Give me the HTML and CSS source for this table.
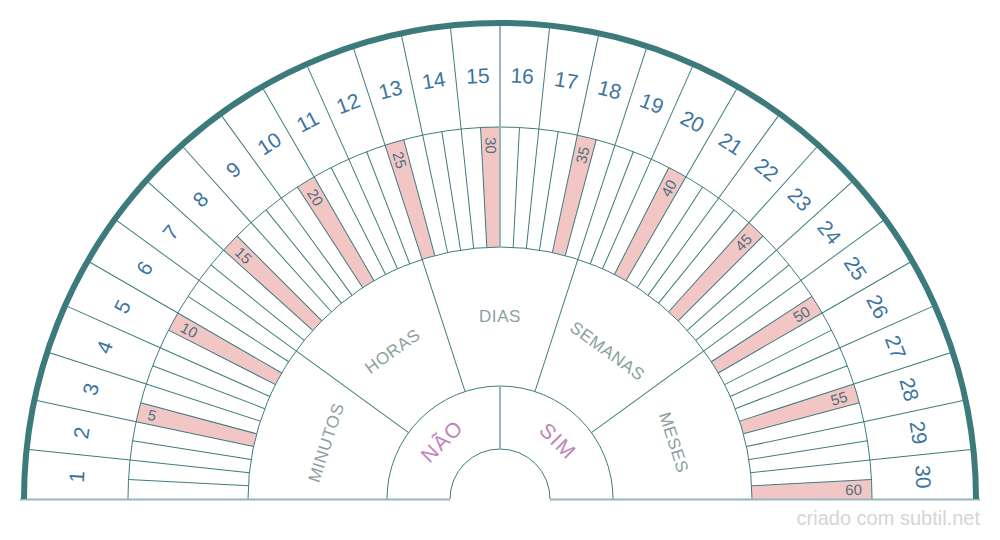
FILE: index.html
```html
<!DOCTYPE html>
<html lang="pt">
<head>
<meta charset="utf-8">
<title>Pêndulo – tempo</title>
<link rel="stylesheet" href="styles.css">
</head>
<body>
<svg class="dial" width="1000" height="540" viewBox="0 0 1000 540">
  <g transform="translate(500,499)">
    <g id="fills"></g>
    <g id="lines"></g>
    <!-- rings -->
    <path class="thin" d="M -372 0 A 372 372 0 0 1 372 0"/>
    <path class="thin" d="M -252 0 A 252 252 0 0 1 252 0"/>
    <path class="thin" d="M -113 0 A 113 113 0 0 1 113 0"/>
    <path class="thin" d="M -50 0 A 50 50 0 0 1 50 0"/>
    <!-- middle ring dividers -->
    <line class="thin" x1="113" y1="0" x2="252" y2="0" transform="rotate(-36)"/>
    <line class="thin" x1="113" y1="0" x2="252" y2="0" transform="rotate(-72)"/>
    <line class="thin" x1="113" y1="0" x2="252" y2="0" transform="rotate(-108)"/>
    <line class="thin" x1="113" y1="0" x2="252" y2="0" transform="rotate(-144)"/>
    <!-- centre ruler -->
    <line class="light" x1="0" y1="-50" x2="0" y2="-113"/>
    <line class="light" x1="0" y1="-252" x2="0" y2="-476"/>
    <!-- base line -->
    <line class="light" x1="-480" y1="0.5" x2="-50" y2="0.5"/>
    <line class="light" x1="50" y1="0.5" x2="480" y2="0.5"/>
    <path class="outer" d="M -476 0 A 476 476 0 0 1 476 0"/>
    <!-- section labels -->
    <text class="sec" transform="rotate(-162) translate(183,0) rotate(90)" dy="0.35em">MINUTOS</text>
    <text class="sec" transform="rotate(-126) translate(183,0) rotate(90)" dy="0.35em">HORAS</text>
    <text class="sec" transform="rotate(-90) translate(183,0) rotate(90)" dy="0.35em">DIAS</text>
    <text class="sec" transform="rotate(-54) translate(183,0) rotate(90)" dy="0.35em">SEMANAS</text>
    <text class="sec" transform="rotate(-18) translate(183,0) rotate(90)" dy="0.35em">MESES</text>
    <text class="yn" transform="rotate(-135) translate(82,0) rotate(90)" dy="0.35em">NÃO</text>
    <text class="yn" transform="rotate(-45) translate(82,0) rotate(90)" dy="0.35em">SIM</text>
    <g id="labels"></g>
  </g>
  <text class="credit" x="980" y="525">criado com subtil.net</text>
</svg>
<script src="script.js"></script>
</body>
</html>
```

FILE: styles.css
```css
html, body {
  margin: 0;
  padding: 0;
  background: #ffffff;
}
.dial {
  display: block;
  font-family: "Liberation Sans", Arial, sans-serif;
}
.thin {
  fill: none;
  stroke: #3e7c7d;
  stroke-width: 1;
}
.light {
  fill: none;
  stroke: #94b8ba;
  stroke-width: 2;
}
.outer {
  fill: none;
  stroke: #3d7a7b;
  stroke-width: 6;
}
.pink {
  fill: #f2c6c5;
  stroke: none;
}
.num {
  fill: #3b74a0;
  font-size: 21px;
  text-anchor: middle;
}
.min {
  fill: #4f707e;
  font-size: 15px;
}
.min-left { text-anchor: start; }
.min-right { text-anchor: end; }
.sec {
  fill: #8ba0a0;
  font-size: 17px;
  letter-spacing: 0.6px;
  text-anchor: middle;
}
.yn {
  fill: #c384bc;
  font-size: 21px;
  letter-spacing: 1.5px;
  text-anchor: middle;
}
.credit {
  fill: #d5d5d5;
  font-size: 20px;
  text-anchor: end;
}
```

FILE: script.js
```js
(function () {
  var NS = 'http://www.w3.org/2000/svg';
  var fills = document.getElementById('fills');
  var lines = document.getElementById('lines');
  var labels = document.getElementById('labels');

  function el(tag, attrs, parent, text) {
    var e = document.createElementNS(NS, tag);
    for (var k in attrs) e.setAttribute(k, attrs[k]);
    if (text !== undefined) e.textContent = text;
    parent.appendChild(e);
    return e;
  }
  function P(r, a) {
    var t = a * Math.PI / 180;
    return (r * Math.cos(t)).toFixed(2) + ' ' + (-r * Math.sin(t)).toFixed(2);
  }

  // minute ring: 60 cells of 3 degrees, radii 252..372
  for (var k = 1; k <= 60; k++) {
    var a1 = 180 - 3 * (k - 1), a2 = 180 - 3 * k, mid = (a1 + a2) / 2;
    if (k % 5 === 0) {
      el('path', {
        'class': 'pink',
        d: 'M ' + P(372, a1) + ' A 372 372 0 0 1 ' + P(372, a2) +
           ' L ' + P(252, a2) + ' A 252 252 0 0 0 ' + P(252, a1) + ' Z'
      }, fills);
      if (mid > 90) {
        el('text', {
          'class': 'min min-left', dy: '0.35em',
          transform: 'rotate(' + (-mid) + ') translate(362,0) rotate(180)'
        }, labels, String(k));
      } else {
        el('text', {
          'class': 'min min-right', dy: '0.35em',
          transform: 'rotate(' + (-mid) + ') translate(362,0)'
        }, labels, String(k));
      }
    }
    if (k < 60 && a2 !== 90) {
      el('line', {
        'class': 'thin', x1: 252, y1: 0, x2: 372, y2: 0,
        transform: 'rotate(' + (-a2) + ')'
      }, lines);
    }
  }

  // number ring: 30 cells of 6 degrees, radii 372..476
  for (var n = 1; n <= 30; n++) {
    var b1 = 180 - 6 * (n - 1), b2 = 180 - 6 * n, m = (b1 + b2) / 2;
    el('text', {
      'class': 'num', dy: '0.36em',
      transform: 'rotate(' + (-m) + ') translate(424,0) rotate(90)'
    }, labels, String(n));
    if (n < 30 && b2 !== 90) {
      el('line', {
        'class': 'thin', x1: 372, y1: 0, x2: 476, y2: 0,
        transform: 'rotate(' + (-b2) + ')'
      }, lines);
    }
  }
})();
```
